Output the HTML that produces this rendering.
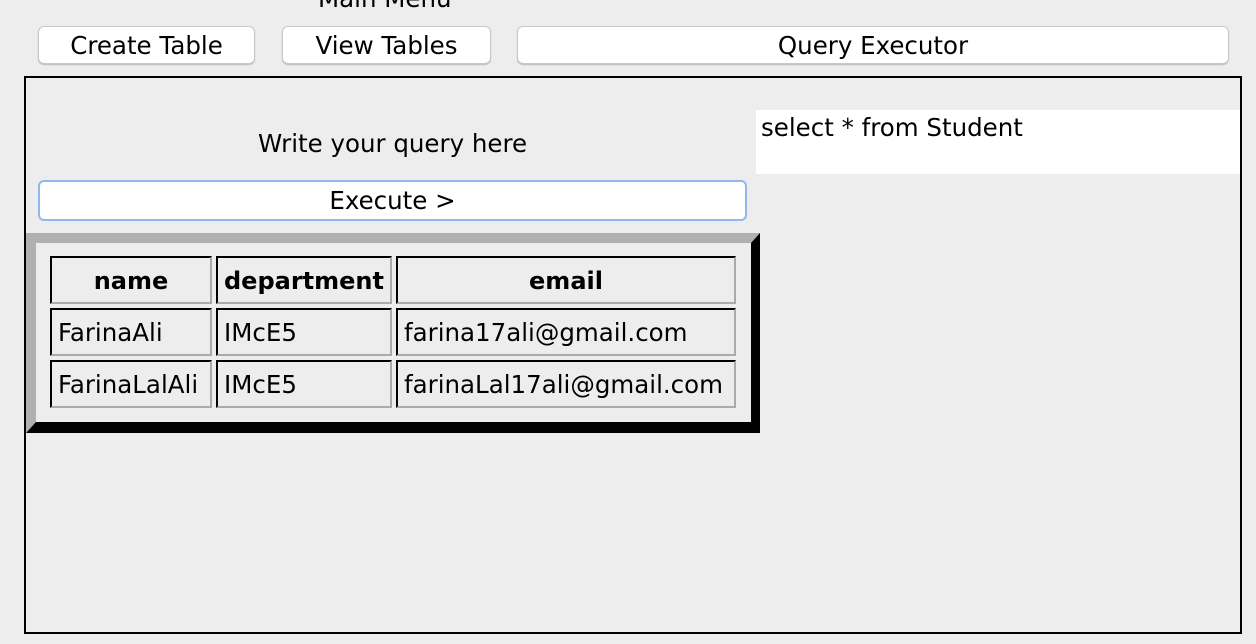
<!DOCTYPE html>
<html><head><style>
body{margin:0;width:1256px;height:644px;background:#ededed;position:relative;overflow:hidden;font-family:"DejaVu Sans","Liberation Sans",sans-serif;color:#000}
.a{position:absolute;box-sizing:border-box}
.btn{background:#fff;border:1px solid #c8c8c8;border-radius:6px;box-shadow:0 1px 1px #bbb;text-align:center;font-size:24.5px;line-height:37px}
.c{position:absolute;box-sizing:border-box;border-style:solid;border-width:2px;border-color:#000 #aaa #aaa #000;font-size:24.5px;line-height:46px;padding-left:6px;white-space:nowrap}
.h{font-weight:bold;text-align:center;padding-left:0;font-size:24px}
</style></head><body>
<div class="a" style="left:318px;top:-14px;font-size:24.5px;line-height:26px">Main Menu</div>
<div class="a btn" style="left:38px;top:26px;width:217px;height:38px">Create Table</div>
<div class="a btn" style="left:282px;top:26px;width:209px;height:38px">View Tables</div>
<div class="a btn" style="left:517px;top:26px;width:712px;height:38px">Query Executor</div>
<div class="a" style="left:24px;top:76px;width:1218px;height:558px;border:2px solid #000"></div>
<div class="a" style="left:258px;top:129px;font-size:24.5px;line-height:30px">Write your query here</div>
<div class="a" style="left:38px;top:180px;width:709px;height:41px;background:#fff;border:2px solid #8fb8ec;border-radius:6px;text-align:center;font-size:24.5px;line-height:38px">Execute &gt;</div>
<div class="a" style="left:756px;top:110px;width:484px;height:64px;background:#fff;font-size:24.5px;line-height:35px;padding-left:5px">select * from Student</div>
<div class="a" style="left:26px;top:233px;width:734px;height:200px;border-style:solid;border-width:10px 9px 11px 10px;border-color:#b0b0b0 #000 #000 #b0b0b0;background:#ededed"></div>
<div class="c h" style="left:50px;top:256px;width:162px;height:48px">name</div>
<div class="c h" style="left:216px;top:256px;width:176px;height:48px">department</div>
<div class="c h" style="left:396px;top:256px;width:340px;height:48px">email</div>
<div class="c" style="left:50px;top:308px;width:162px;height:48px">FarinaAli</div>
<div class="c" style="left:216px;top:308px;width:176px;height:48px">IMcE5</div>
<div class="c" style="left:396px;top:308px;width:340px;height:48px">farina17ali@gmail.com</div>
<div class="c" style="left:50px;top:360px;width:162px;height:48px">FarinaLalAli</div>
<div class="c" style="left:216px;top:360px;width:176px;height:48px">IMcE5</div>
<div class="c" style="left:396px;top:360px;width:340px;height:48px">farinaLal17ali@gmail.com</div>
</body></html>
